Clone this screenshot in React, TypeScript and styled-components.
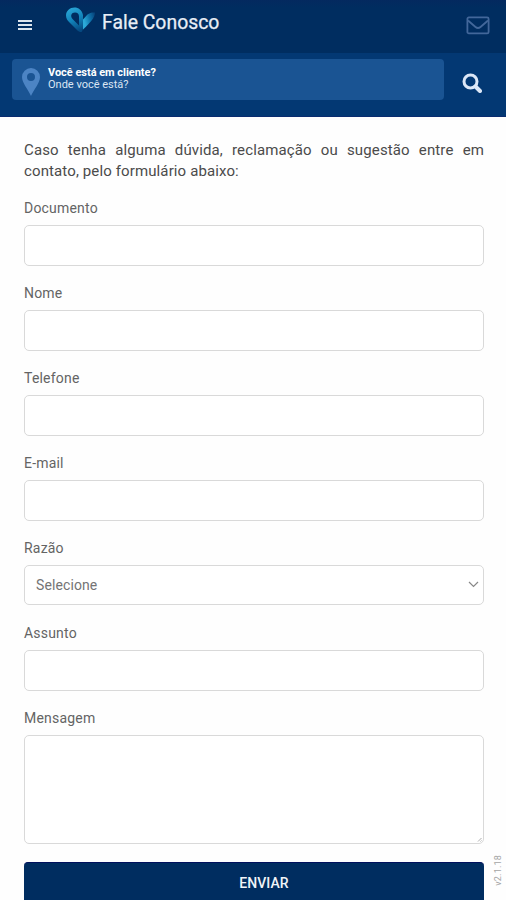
import React from "react";
import styled, { createGlobalStyle } from "styled-components";

const GlobalStyle = createGlobalStyle`
  * { box-sizing: border-box; }
  body { margin: 0; background: #fefefe; font-family: Roboto, "Liberation Sans", sans-serif; overflow: hidden; }
`;

const Page = styled.div`
  position: relative;
  width: 506px;
  height: 900px;
  overflow: hidden;
  background: #fefefe;
  display: flex;
  flex-direction: column;
`;

const TopBar = styled.header`
  height: 53px;
  flex: none;
  display: flex;
  align-items: center;
  padding: 0 16px 0 18px;
  background: linear-gradient(#04295f 0, #002d60 8px);
`;

const MenuIcon = styled.svg`
  width: 14px;
  height: 12px;
  margin: 0 34px 3px 0;
`;

const Logo = styled.svg`
  width: 29px;
  height: 26px;
  margin-bottom: 13px;
`;

const Title = styled.h1`
  flex: 1;
  margin: 0 0 8px 7px;
  font-size: 19.4px;
  line-height: 24px;
  font-weight: 400;
  -webkit-text-stroke: 0.25px #e9eef6;
  color: #e9eef6;
`;

const MailIcon = styled.svg`
  width: 24px;
  height: 19px;
  margin-bottom: 3px;
`;

const SearchBar = styled.div`
  height: 64px;
  flex: none;
  display: flex;
  padding: 6px 0 0 12px;
  background: #033873;
  border-bottom: 1px solid #0a2c70;
`;

const PlaceBox = styled.div`
  width: 432px;
  height: 41px;
  border-radius: 4px;
  background: #1a5493;
  display: flex;
  align-items: center;
`;

const Pin = styled.svg`
  width: 18px;
  height: 28px;
  margin: 4px 8px 0 10px;
`;

const PlaceText = styled.div`
  margin-bottom: 2px;
  font-size: 11px;
  line-height: 12px;
  color: #dbe6f4;
`;

const PlaceTitle = styled.strong`
  display: block;
  font-weight: 700;
  color: #fff;
  letter-spacing: -0.03px;
`;

const SearchIcon = styled.svg`
  width: 20px;
  height: 20px;
  margin: 14px 0 0 18px;
`;

const Form = styled.main`
  padding: 23px 22px 0 24px;
  display: flex;
  flex-direction: column;
`;

const Intro = styled.p`
  margin: 0 0 17px;
  width: 460px;
  font-size: 15px;
  line-height: 21px;
  letter-spacing: 0.12px;
  color: #4b4b4b;
  text-align: justify;
`;

const Field = styled.label<{ $tall?: boolean }>`
  display: flex;
  flex-direction: column;
  width: 460px;
  height: ${(p) => (p.$tall ? "153px" : "84.95px")};
`;

const FieldName = styled.span`
  height: 26px;
  line-height: 19px;
  font-size: 14px;
  letter-spacing: 0.2px;
  color: #646464;
`;

const Control = styled.span<{ $height?: number }>`
  display: flex;
  align-items: center;
  justify-content: space-between;
  height: ${(p) => p.$height ?? 41}px;
  padding: 0 4px 0 11px;
  border: 1.5px solid #d9d9d9;
  border-radius: 5px;
  background: #fff;
  font-size: 14px;
  letter-spacing: 0.1px;
  color: #747474;
`;

const Chevron = styled.svg`
  width: 11px;
  height: 7px;
`;

const Grip = styled.svg`
  width: 5px;
  height: 5px;
  align-self: flex-end;
  margin: 0 -3px 1px auto;
`;

const Submit = styled.button`
  width: 460px;
  height: 42px;
  padding: 0 0 0 20px;
  border: 0;
  border-top: 1px solid #00105c;
  border-radius: 4px;
  background: #002d60;
  color: #f1f4f8;
  font: 500 14px Roboto, sans-serif;
  letter-spacing: 0.05px;
`;

const Version = styled.span`
  position: absolute;
  right: 2px;
  bottom: 14px;
  writing-mode: vertical-rl;
  transform: rotate(180deg);
  font-size: 9px;
  line-height: 12px;
  letter-spacing: 0.2px;
  color: #a5a5a5;
`;

const inputs = ["Documento", "Nome", "Telefone", "E-mail"];

export default function App() {
  return (
    <Page>
      <GlobalStyle />
      <TopBar>
        <MenuIcon viewBox="0 0 14 12" fill="#dde6ee">
          <rect y="1" width="14" height="2" />
          <rect y="5" width="14" height="2" />
          <rect y="9" width="14" height="2" />
        </MenuIcon>
        <Logo viewBox="0 0 29 26">
          <defs>
            <linearGradient id="loop" x1="0.3" y1="0" x2="0.6" y2="1">
              <stop offset="0" stopColor="#2aa6d6" />
              <stop offset="0.5" stopColor="#1284ba" />
              <stop offset="1" stopColor="#054a82" />
            </linearGradient>
            <linearGradient id="wing" x1="1" y1="0.1" x2="0.1" y2="0.5">
              <stop offset="0" stopColor="#06427a" />
              <stop offset="0.5" stopColor="#0f72aa" />
              <stop offset="1" stopColor="#2ba9d8" />
            </linearGradient>
          </defs>
          <path
            fillRule="evenodd"
            fill="url(#loop)"
            d="M17 15V8C16 3 12.500.5 8.500.5 4 .5 0 4 0 8.500c0 3 1.500 5 3.500 7l8 8c1.500 1.500 3 2 4.500 1l1-2.500v-4.500ZM13 18.500l-6-6C3.500 9 5.500 5.500 9 5.500c2.500 0 4 1.500 4 4Z"
          />
          <path d="M17 12.500 21.500 7.500c2-1.800 5-2.300 7.500-2 0 5-4.500 10-12 17Z" fill="url(#wing)" />
        </Logo>
        <Title>Fale Conosco</Title>
        <MailIcon viewBox="0 0 24 19" fill="none" stroke="#42679a" strokeWidth="1.800">
          <rect x="1.400" y="1.400" width="21.200" height="16" rx="1.500" />
          <path d="M2 4.500 9.500 11c1.800 1.500 3.200 1.500 5 0L22 4.500" />
        </MailIcon>
      </TopBar>
      <SearchBar>
        <PlaceBox>
          <Pin viewBox="0 0 18 28">
            <path
              fillRule="evenodd"
              fill="#4c84c4"
              d="M9 0a9 9 0 0 0-9 9c0 6 6 12 9 19 3-7 9-13 9-19a9 9 0 0 0-9-9Zm0 5a4 4 0 1 1 0 8 4 4 0 0 1 0-8Z"
            />
          </Pin>
          <PlaceText>
            <PlaceTitle>Você está em cliente?</PlaceTitle>
            Onde você está?
          </PlaceText>
        </PlaceBox>
        <SearchIcon viewBox="0 0 20 20" fill="none" stroke="#dce7f7">
          <circle cx="8.500" cy="8.500" r="6.500" strokeWidth="3" />
          <path d="m13.500 13.500 4.500 4.500" strokeWidth="4" strokeLinecap="round" />
        </SearchIcon>
      </SearchBar>
      <Form>
        <Intro>
          Caso tenha alguma dúvida, reclamação ou sugestão entre em contato, pelo formulário abaixo:
        </Intro>
        {inputs.map((name) => (
          <Field key={name}>
            <FieldName>{name}</FieldName>
            <Control />
          </Field>
        ))}
        <Field>
          <FieldName>Razão</FieldName>
          <Control $height={40}>
            Selecione
            <Chevron viewBox="0 0 11 7">
              <path d="M1 1l4.500 4.500L10 1" fill="none" stroke="#888" strokeWidth="1.200" />
            </Chevron>
          </Control>
        </Field>
        <Field>
          <FieldName>Assunto</FieldName>
          <Control />
        </Field>
        <Field $tall>
          <FieldName>Mensagem</FieldName>
          <Control $height={109}>
            <Grip viewBox="0 0 5 5">
              <path d="M1 4.500 4.500 1M3.500 4.500l1-1" stroke="#999" strokeWidth=".8" />
            </Grip>
          </Control>
        </Field>
        <Submit>ENVIAR</Submit>
      </Form>
      <Version>v2.1.18</Version>
    </Page>
  );
}
